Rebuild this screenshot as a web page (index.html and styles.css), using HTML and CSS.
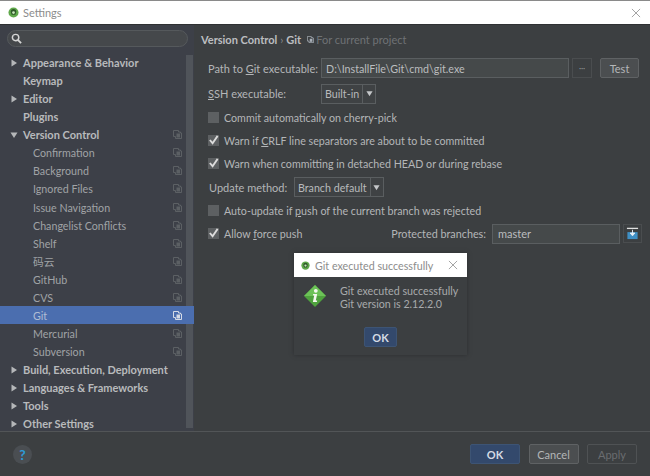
FILE: index.html
```html
<!DOCTYPE html>
<html lang="en">
<head>
<meta charset="utf-8">
<title>Settings</title>
<link rel="stylesheet" href="styles.css">
</head>
<body>
<svg class="defs" width="0" height="0">
  <symbol id="logo" viewBox="0 0 12 12"><circle cx="6" cy="6" r="5.5" fill="#5fa84a"/><path d="M3 5.2a3 3 0 0 1 6 0L8 8.5H4Z" fill="#2f5a2a"/><circle cx="6" cy="6" r="1.5" fill="#c9e6bd"/></symbol>
  <symbol id="copy" viewBox="0 0 9 9"><path d="M0.5 0.5h5v1.5h2v1h1v5.500h-6v-2h-2Z" fill="none" stroke="currentColor"/><path d="M3.500 3.500h3.500v4h-3.500Z" fill="currentColor"/></symbol>
  <symbol id="arrow" viewBox="0 0 8 8"><path d="M1.500 0.500 7 4 1.500 7.500Z" fill="currentColor"/></symbol>
  <symbol id="down" viewBox="0 0 8 8"><path d="M0.500 1.500h7L4 7Z" fill="currentColor"/></symbol>
  <symbol id="check" viewBox="0 0 12 12"><path d="M2 6 5 9.500 10.500 1.500" fill="none" stroke="#dcdcdc" stroke-width="2"/></symbol>
  <symbol id="close" viewBox="0 0 11 11"><path d="M1 1 10 10M10 1 1 10" stroke="#9a9a9a" stroke-width="1"/></symbol>
</svg>

<div class="window">
  <header class="titlebar">
    <svg class="logo"><use href="#logo"/></svg>
    <span class="title">Settings</span>
    <svg class="close"><use href="#close"/></svg>
  </header>

  <div class="main">
    <aside class="sidebar">
      <div class="search-wrap">
        <div class="search">
          <svg class="search-icon" viewBox="0 0 12 12"><circle cx="5" cy="5" r="3.500" fill="none" stroke="#d5d5d5" stroke-width="1.600"/><path d="M7.500 7.500 11 11" stroke="#d5d5d5" stroke-width="2"/></svg>
        </div>
      </div>
      <div class="tree-wrap">
        <ul class="tree">
          <li class="row top"><svg class="arrow"><use href="#arrow"/></svg>Appearance &amp; Behavior</li>
          <li class="row top"><span class="noarrow"></span>Keymap</li>
          <li class="row top"><svg class="arrow"><use href="#arrow"/></svg>Editor</li>
          <li class="row top"><span class="noarrow"></span>Plugins</li>
          <li class="row top"><svg class="arrow"><use href="#down"/></svg><span class="grow">Version Control</span><svg class="copy"><use href="#copy"/></svg></li>
          <li class="row sub"><span class="grow">Confirmation</span><svg class="copy"><use href="#copy"/></svg></li>
          <li class="row sub"><span class="grow">Background</span><svg class="copy"><use href="#copy"/></svg></li>
          <li class="row sub"><span class="grow">Ignored Files</span><svg class="copy"><use href="#copy"/></svg></li>
          <li class="row sub"><span class="grow">Issue Navigation</span><svg class="copy"><use href="#copy"/></svg></li>
          <li class="row sub"><span class="grow">Changelist Conflicts</span><svg class="copy"><use href="#copy"/></svg></li>
          <li class="row sub"><span class="grow">Shelf</span><svg class="copy"><use href="#copy"/></svg></li>
          <li class="row sub"><span class="grow">码云</span><svg class="copy"><use href="#copy"/></svg></li>
          <li class="row sub"><span class="grow">GitHub</span><svg class="copy"><use href="#copy"/></svg></li>
          <li class="row sub"><span class="grow">CVS</span><svg class="copy"><use href="#copy"/></svg></li>
          <li class="row sub selected"><span class="grow">Git</span><svg class="copy"><use href="#copy"/></svg></li>
          <li class="row sub"><span class="grow">Mercurial</span><svg class="copy"><use href="#copy"/></svg></li>
          <li class="row sub"><span class="grow">Subversion</span><svg class="copy"><use href="#copy"/></svg></li>
          <li class="row top"><svg class="arrow"><use href="#arrow"/></svg>Build, Execution, Deployment</li>
          <li class="row top"><svg class="arrow"><use href="#arrow"/></svg>Languages &amp; Frameworks</li>
          <li class="row top"><svg class="arrow"><use href="#arrow"/></svg>Tools</li>
          <li class="row top"><svg class="arrow"><use href="#arrow"/></svg>Other Settings</li>
        </ul>
        <div class="scrollbar"></div>
      </div>
    </aside>

    <section class="content">
      <div class="crumbs">
        <b>Version Control</b><span class="sep">›</span><b>Git</b>
        <svg class="copy crumb-copy"><use href="#copy"/></svg>
        <span class="hint">For current project</span>
      </div>
      <div class="form">
        <div class="field f-path">
          <label class="lbl-path">Path to <u>G</u>it executable:</label>
          <div class="input path">D:\InstallFile\Git\cmd\git.exe</div>
          <div class="dots">···</div>
          <div class="btn test">Test</div>
        </div>
        <div class="field f-ssh">
          <label class="lbl-path"><u>S</u>SH executable:</label>
          <div class="combo combo-ssh"><span class="combo-text">Built-in</span><span class="combo-arrow"><svg><use href="#down"/></svg></span></div>
        </div>
        <div class="field f-check"><span class="cb"></span><span>Commit automatically on cherry-pick</span></div>
        <div class="field f-check"><span class="cb"><svg><use href="#check"/></svg></span><span>Warn if <u>C</u>RLF line separators are about to be committed</span></div>
        <div class="field f-check"><span class="cb"><svg><use href="#check"/></svg></span><span>Warn when committing in detached HEAD or during rebase</span></div>
        <div class="field f-update">
          <label class="lbl-update">Update method:</label>
          <div class="combo combo-update"><span class="combo-text">Branch default</span><span class="combo-arrow"><svg><use href="#down"/></svg></span></div>
        </div>
        <div class="field f-check"><span class="cb"></span><span>Auto-update if <u>p</u>ush of the current branch was rejected</span></div>
        <div class="field f-check f-force">
          <span class="cb"><svg><use href="#check"/></svg></span><span class="grow">Allow <u>f</u>orce push</span>
          <label class="lbl-branches">Protected branches:</label>
          <div class="input branches">master</div>
          <div class="fetch">
            <svg viewBox="0 0 14 14"><path d="M1 1.500h12" stroke="#e0e0e0" stroke-width="1.400"/><path d="M1.500 5.500h11v7.500h-11Z" fill="#3f8fc4"/><path d="M7 3v5.500M4.500 6.500 7 9.500l2.500-3Z" fill="#e6eef5" stroke="#e6eef5"/></svg>
          </div>
        </div>
      </div>
    </section>
  </div>

  <footer class="footer">
    <div class="help">?</div>
    <div class="actions">
      <div class="btn primary">OK</div>
      <div class="btn">Cancel</div>
      <div class="btn disabled">Apply</div>
    </div>
  </footer>
</div>

<div class="dialog">
  <header class="dialog-title">
    <svg class="logo"><use href="#logo"/></svg>
    <span class="title grow">Git executed successfully</span>
    <svg class="close"><use href="#close"/></svg>
  </header>
  <div class="dialog-body">
    <svg class="info" viewBox="0 0 24 24"><path d="M12 1 23 12 12 23 1 12Z" fill="#4fa23e"/><path d="M12 1 23 12H1Z" fill="#6cc257"/><circle cx="12.800" cy="6.800" r="1.900" fill="#f4f8ef"/><path d="M10 10h4.200l-1.400 6.500h1.400l-.3 1.500h-4l1.300-6.500h-1Z" fill="#f4f8ef"/></svg>
    <p class="msg">Git executed successfully<br>Git version is 2.12.2.0</p>
  </div>
  <div class="dialog-actions"><div class="btn primary small">OK</div></div>
</div>
</body>
</html>
```

FILE: styles.css
```css
* { box-sizing: border-box; }
html, body { margin: 0; padding: 0; }
body {
  width: 650px;
  height: 476px;
  overflow: hidden;
  position: relative;
  background: #3c3f41;
  font-family: Lato, "Noto Sans CJK SC", sans-serif;
  font-size: 10.700px;
  color: #b4b6b8;
}
.defs { position: absolute; }
.grow { flex: 1; }
u { text-underline-offset: 1px; }

.window { display: flex; flex-direction: column; height: 476px; }

.titlebar {
  height: 25px;
  flex: none;
  background: #fff;
  border-top: 1px solid #8a8a8a;
  border-bottom: 1px solid #2f3133;
  display: flex;
  align-items: center;
  padding: 0 9px 0 8px;
}
.logo { width: 11px; height: 11px; flex: none; }
.title { color: #8c8c8c; margin-left: 4px; }
.titlebar .title { flex: 1; font-size: 11px; }
.close { width: 10px; height: 10px; flex: none; }

.main { display: flex; height: 406px; flex: none; overflow: hidden; }

.sidebar { width: 194px; flex: none; background: #3d4048; display: flex; flex-direction: column; }
.search-wrap { padding: 5px 6px 0 7px; height: 28.5px; flex: none; }
.search {
  height: 17px;
  width: 181px;
  border: 1px solid #55595c;
  border-radius: 9px;
  background: #45484b;
  display: flex;
  align-items: center;
  padding-left: 3px;
}
.search-icon { width: 11px; height: 11px; }

.tree-wrap { flex: 1; display: flex; min-height: 0; }
.tree { list-style: none; margin: 0; padding: 0; flex: 1; min-width: 0; }
.row { height: 18.07px; display: flex; align-items: center; white-space: nowrap; padding-right: 4px; }
.top { font-weight: 700; font-size: 11px; color: #b8babc; padding-left: 10px; }
.sub { padding-left: 33px; color: #a0a3a6; }
.arrow { width: 8px; height: 8px; margin-right: 5px; color: #b5b7b9; flex: none; }
.noarrow { width: 13px; flex: none; }
.copy { width: 9px; height: 9px; color: #5c6064; flex: none; }
.selected { position: relative; z-index: 1; background: #4b6eaf; color: #b0bdd4; margin-right: -8px; padding-right: 12px; }
.selected .copy { color: #d5dbe6; }
.scrollbar { width: 7px; margin: 1px 1px 0 0; background: #50545a; height: 373px; flex: none; }

.content { flex: 1; padding: 0 0 0 7px; min-width: 0; }
.crumbs { height: 29px; display: flex; align-items: center; color: #bcbec0; font-size: 11px; }
.crumbs b { font-weight: 700; }
.sep { margin: 0 3px; color: #8a8c8e; }
.crumb-copy { width: 7px; height: 7px; margin: 0 2px 0 6px; color: #a9b0b8; }
.hint { color: #6f7275; }

.form { padding-left: 1px; display: flex; flex-direction: column; }
.field { display: flex; align-items: center; white-space: nowrap; }
.f-path { height: 26px; margin-top: 1px; padding-left: 6px; }
.lbl-path { width: 113px; flex: none; font-size: 11px; }
.input { border: 1px solid #5a5e60; background: #45494a; height: 20px; display: flex; align-items: center; padding-left: 4px; color: #bbbdbf; }
.path { width: 248px; }
.dots { width: 20px; height: 20px; margin-left: 3px; border: 1px solid #4a4d4f; color: #9a9c9e; font-size: 8px; display: flex; align-items: center; justify-content: center; }
.test { height: 20px; margin-left: 8px; }
.f-ssh { height: 25px; padding-left: 6px; }
.combo { display: flex; height: 20px; border: 1px solid #5a5e60; background: #3f4244; }
.combo-ssh { width: 55px; }
.combo-update { width: 90px; }
.combo-text { flex: 1; padding: 0 3px; display: flex; align-items: center; color: #b8babc; }
.combo-arrow { width: 15px; border-left: 1px solid #5a5e60; display: flex; align-items: center; justify-content: center; color: #c5c7c9; }
.combo-arrow svg { width: 7px; height: 7px; }
.f-check { height: 23px; }
.cb { width: 11px; height: 11px; margin: 0 5px 0 6px; background: #5d6062; flex: none; display: flex; }
.cb svg { width: 12px; height: 12px; margin: -1px 0 0 0; }
.f-update { height: 24px; padding-left: 7px; }
.lbl-update { width: 85px; flex: none; font-size: 11px; }
.lbl-branches { margin-right: 6px; font-size: 10.800px; }
.branches { width: 128px; margin-right: 3px; padding-left: 5px; font-size: 11px; }
.fetch { width: 19px; height: 19px; border: 1px solid #4a4d4f; display: flex; align-items: center; justify-content: center; margin-right: 8px; }
.fetch svg { width: 13px; height: 13px; }

.footer { height: 45px; flex: none; border-top: 1px solid #525557; display: flex; align-items: center; justify-content: space-between; padding: 0 13px; }
.help { width: 19px; height: 19px; border-radius: 50%; background: #4a4e52; color: #2e9bd6; font-weight: 700; font-size: 14px; display: flex; align-items: center; justify-content: center; }
.actions { display: flex; gap: 8.500px; }
.btn { width: 50px; height: 20px; border: 1px solid #5f6264; border-radius: 2px; background: #4b4e50; color: #b4b6b8; display: flex; align-items: center; justify-content: center; font-size: 11px; }
.btn.test { width: 39px; }
.primary { background: #33496c; border-color: #3d5474; color: #d5dbe4; font-weight: 700; }
.disabled { background: transparent; border-color: #4f5254; color: #6a6d70; }

.dialog { position: absolute; left: 294px; top: 253px; width: 173px; height: 102px; background: #3c3f41; box-shadow: 0 0 4px #2c2e30; }
.dialog-title { height: 24px; background: #fff; display: flex; align-items: center; padding: 0 9px 0 7px; }
.dialog-title .logo { width: 9px; height: 9px; margin-right: 1px; }
.dialog-body { display: flex; height: 50px; padding: 6px 0 0 9px; white-space: nowrap; }
.info { width: 24px; height: 24px; flex: none; margin-top: 1px; margin-right: 13px; }
.msg { margin: 0; line-height: 13px; color: #a8aaac; padding-top: 1px; }
.dialog-actions { display: flex; justify-content: center; }
.small { width: 33px; height: 20px; }
```
